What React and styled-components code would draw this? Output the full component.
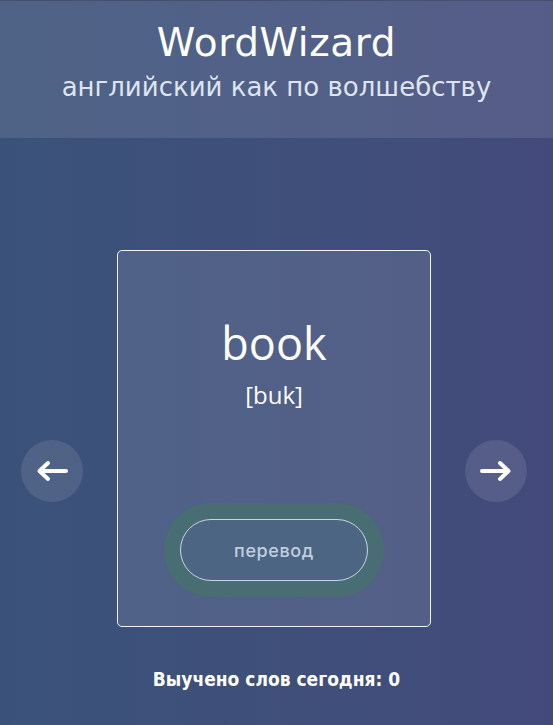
import styled, { createGlobalStyle } from "styled-components";

const GlobalStyle = createGlobalStyle`
  html, body {
    margin: 0;
    padding: 0;
  }
  body {
    background: linear-gradient(90deg, #3a5279 0%, #3f4f7a 55%, #434a7b 100%);
    min-height: 725px;
    font-family: "DejaVu Sans", sans-serif;
  }
`;

const ArrowLeft = () => (
  <svg width="32" height="22" viewBox="0 0 32 22" fill="none">
    <path
      d="M30 11H4M12 3L3.5 11L12 19"
      stroke="#fff"
      strokeWidth="4"
      strokeLinecap="round"
      strokeLinejoin="round"
    />
  </svg>
);

const ArrowRight = () => (
  <svg width="32" height="22" viewBox="0 0 32 22" fill="none">
    <path
      d="M2 11H28M20 3L28.5 11L20 19"
      stroke="#fff"
      strokeWidth="4"
      strokeLinecap="round"
      strokeLinejoin="round"
    />
  </svg>
);

const App = () => {
  return (
    <Page>
      <GlobalStyle />
      <Header>
        <Title>WordWizard</Title>
        <Subtitle>английский как по волшебству</Subtitle>
      </Header>
      <Main>
        <NavButton aria-label="назад">
          <ArrowLeft />
        </NavButton>
        <Card>
          <Word>book</Word>
          <Transcription>[buk]</Transcription>
          <TranslateButton>перевод</TranslateButton>
        </Card>
        <NavButton aria-label="вперёд">
          <ArrowRight />
        </NavButton>
      </Main>
      <Counter>Выучено слов сегодня: 0</Counter>
    </Page>
  );
};

export default App;

const Page = styled.div`
  min-height: 725px;
  display: flex;
  flex-direction: column;
  border-top: 1px solid #44506e;
  box-sizing: border-box;
`;

const Header = styled.header`
  background: rgba(255, 255, 255, 0.1);
  height: 137px;
  display: flex;
  flex-direction: column;
  align-items: center;
  padding-top: 18px;
  box-sizing: border-box;
`;

const Title = styled.h1`
  margin: 0;
  font-family: "DejaVu Sans", sans-serif;
  font-weight: normal;
  font-size: 39px;
  line-height: 48px;
  color: #ffffff;
  letter-spacing: 0.6px;
`;

const Subtitle = styled.p`
  margin: 0;
  font-family: "DejaVu Sans", sans-serif;
  font-size: 26px;
  line-height: 40px;
  color: #dfe4f2;
`;

const Main = styled.main`
  display: flex;
  justify-content: center;
  align-items: center;
  gap: 34px;
  padding-top: 112px;
  padding-right: 5px;
`;

const NavButton = styled.button`
  width: 62px;
  height: 62px;
  border-radius: 50%;
  border: none;
  background: rgba(255, 255, 255, 0.1);
  display: flex;
  align-items: center;
  justify-content: center;
  padding: 0;
  margin-top: 64px;
  cursor: pointer;
`;

const Card = styled.div`
  width: 314px;
  height: 377px;
  box-sizing: border-box;
  border: 1px solid #f2f4fa;
  border-radius: 5px;
  background: rgba(255, 255, 255, 0.1);
  display: flex;
  flex-direction: column;
  align-items: center;
  padding-top: 65px;
`;

const Word = styled.div`
  font-family: "Open Sans", sans-serif;
  font-size: 45px;
  line-height: 54px;
  color: #ffffff;
`;

const Transcription = styled.div`
  font-family: "Open Sans", sans-serif;
  font-size: 24px;
  line-height: 32px;
  margin-top: 9px;
  color: #ffffff;
`;

const TranslateButton = styled.button`
  margin-top: 108px;
  width: 188px;
  height: 62px;
  border-radius: 31px;
  border: 1px solid #c9d3e6;
  background: #4c6583;
  box-shadow: 0 0 0 16px #486d72;
  color: #c3cde2;
  font-family: "Inter", sans-serif;
  font-size: 18px;
  font-weight: 500;
  letter-spacing: 0.6px;
  cursor: pointer;
`;

const Counter = styled.div`
  margin-top: 41px;
  text-align: center;
  font-family: "DejaVu Sans Condensed", "DejaVu Sans", sans-serif;
  font-weight: bold;
  font-size: 19px;
  color: #ffffff;
`;
